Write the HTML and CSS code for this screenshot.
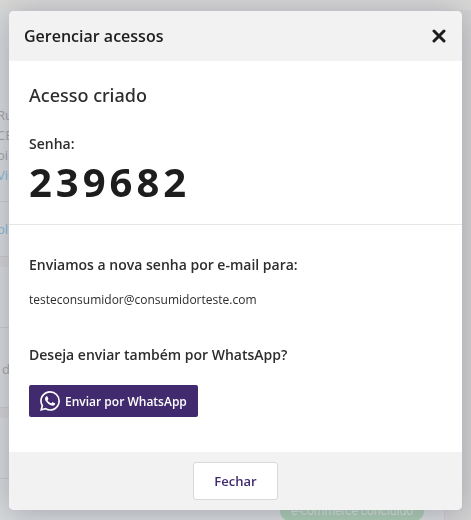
FILE: index.html
```html
<!DOCTYPE html>
<html lang="pt-BR">
<head>
<meta charset="utf-8">
<meta name="viewport" content="width=device-width, initial-scale=1">
<title>Gerenciar acessos</title>
<link rel="stylesheet" href="styles.css">
</head>
<body>
<div class="page" aria-hidden="true">
  <div class="page-top"></div>
  <div class="card card-address">
    <div class="address">
      <p>Ru</p>
      <p>CE</p>
      <p>oi</p>
      <p class="page-link">Vis</p>
    </div>
    <p class="card-foot page-link">ol</p>
  </div>
  <div class="card card-data">
    <div class="card-head"></div>
    <p class="card-row">d</p>
  </div>
  <div class="card card-status">
    <div class="card-head"></div>
    <span class="badge">e-commerce concluído</span>
  </div>
</div>

<div class="overlay">
  <section class="modal" role="dialog" aria-modal="true" aria-labelledby="modal-title">
    <header class="modal-header">
      <h1 id="modal-title">Gerenciar acessos</h1>
      <button class="close" type="button" aria-label="Fechar janela">
        <svg viewBox="0 0 14 14" width="14" height="14"><path d="M2 2l10 10M12 2L2 12"/></svg>
      </button>
    </header>
    <div class="section password">
      <h2>Acesso criado</h2>
      <p class="label">Senha:</p>
      <p class="code">239682</p>
    </div>
    <div class="section delivery">
      <p class="label">Enviamos a nova senha por e-mail para:</p>
      <p class="email">testeconsumidor@consumidorteste.com</p>
      <p class="label">Deseja enviar também por WhatsApp?</p>
      <button class="whatsapp" type="button">
        <svg viewBox="0 0 24 24" width="20" height="20"><path d="M17.472 14.382c-.297-.149-1.758-.867-2.03-.967-.273-.099-.471-.148-.67.15-.197.297-.767.966-.94 1.164-.173.199-.347.223-.644.075-.297-.15-1.255-.463-2.39-1.475-.883-.788-1.48-1.761-1.653-2.059-.173-.297-.018-.458.13-.606.134-.133.298-.347.446-.52.149-.174.198-.298.298-.497.099-.198.05-.371-.025-.52-.075-.149-.669-1.612-.916-2.207-.242-.579-.487-.5-.669-.51-.173-.008-.371-.01-.57-.01-.198 0-.52.074-.792.372-.272.297-1.04 1.016-1.04 2.479 0 1.462 1.065 2.875 1.213 3.074.149.198 2.096 3.2 5.077 4.487.709.306 1.262.489 1.694.625.712.227 1.36.195 1.871.118.571-.085 1.758-.719 2.006-1.413.248-.694.248-1.289.173-1.413-.074-.124-.272-.198-.57-.347m-5.421 7.403h-.004a9.87 9.87 0 01-5.031-1.378l-.361-.214-3.741.982.998-3.648-.235-.374a9.86 9.86 0 01-1.51-5.26c.001-5.45 4.436-9.884 9.888-9.884 2.64 0 5.122 1.03 6.988 2.898a9.825 9.825 0 012.893 6.994c-.003 5.45-4.437 9.884-9.885 9.884m8.413-18.297A11.815 11.815 0 0012.05 0C5.495 0 .16 5.335.157 11.892c0 2.096.547 4.142 1.588 5.945L.057 24l6.305-1.654a11.882 11.882 0 005.683 1.448h.005c6.554 0 11.89-5.335 11.893-11.893a11.821 11.821 0 00-3.48-8.413z"/></svg>
        <span>Enviar por WhatsApp</span>
      </button>
    </div>
    <footer class="modal-footer">
      <button class="dismiss" type="button">Fechar</button>
    </footer>
  </section>
</div>
</body>
</html>
```
FILE: styles.css
```css
* {
  box-sizing: border-box;
}

body,
h1,
h2,
p {
  margin: 0;
}

body {
  height: 100vh;
  overflow: hidden;
  background: #d3d3d3;
  color: #2d2d2d;
  font-family: "Open Sans", "Noto Sans", sans-serif;
  font-size: 14px;
}

button {
  font-family: inherit;
  cursor: pointer;
}

/* Page behind the dialog */
.page {
  height: 100vh;
  overflow: hidden;
  color: #9fa1a1;
  font-size: 13px;
  line-height: 20px;
}

.page p {
  margin-left: -3px;
}

.page-top {
  height: 10px;
  background: #d9d9d7;
}

.page .page-link {
  color: #7fb8d3;
}

.card {
  margin: 0 26px 10px 0;
  background: #d7dada;
  border-right: 1px solid #cccccc;
  border-bottom: 1px solid #c8caca;
}

.address {
  height: 192px;
  padding-top: 95px;
  border-bottom: 1px solid #c8caca;
}

.card-foot {
  padding: 17px 0;
}

.card-head {
  height: 61px;
  border-bottom: 1px solid #c8caca;
}

.card-row {
  padding: 31px 0 28px 5px;
}

.card-status {
  display: flex;
  flex-direction: column;
}

.badge {
  align-self: flex-end;
  margin: 22px 20px 20px;
  padding: 0 11px;
  border-radius: 10px;
  background: #a9cbb1;
  color: #d6e2d8;
  font-family: Roboto, "Open Sans", sans-serif;
  font-size: 12px;
}

/* Dialog */
.overlay {
  position: fixed;
  inset: 0;
  padding: 11px 9px 10px;
}

.modal {
  overflow: hidden;
  border-radius: 5px;
  background: #fff;
  box-shadow: 0 2px 30px rgba(100, 100, 125, 0.45);
}

.modal-header {
  display: flex;
  align-items: center;
  justify-content: space-between;
  height: 50px;
  padding: 0 16px 0 15px;
  background: #f2f2f2;
  color: #1d1d1d;
}

.modal-header h1 {
  font-size: 16px;
  font-weight: 600;
  line-height: 24px;
}

.close {
  display: flex;
  padding: 0;
  border: 0;
  background: none;
}

.close svg {
  fill: none;
  stroke: #1d1d1d;
  stroke-width: 3;
  stroke-linecap: round;
}

.section {
  padding: 0 20px;
}

.password {
  padding-top: 22px;
  padding-bottom: 16px;
  border-bottom: 1px solid #e5e5e5;
}

.password h2 {
  margin-bottom: 25px;
  font-family: "Noto Sans", sans-serif;
  font-size: 18px;
  font-weight: 500;
  line-height: 24px;
}

.label {
  font-weight: 600;
  line-height: 24px;
}

.code {
  color: #1d1d1d;
  font-size: 40px;
  font-weight: 700;
  letter-spacing: 4px;
  line-height: 52px;
}

.delivery {
  padding-top: 28px;
  padding-bottom: 35px;
}

.email {
  margin: 12px 0 32px;
  font-size: 12px;
  line-height: 22px;
}

.whatsapp {
  display: flex;
  align-items: center;
  gap: 5px;
  height: 32px;
  margin-top: 18px;
  padding: 0 11px;
  border: 0;
  border-radius: 2px;
  background: #412b6e;
  color: #fff;
  font-size: 12px;
  font-weight: 600;
}

.whatsapp svg {
  fill: #fff;
}

.modal-footer {
  display: flex;
  justify-content: center;
  padding: 10px;
  background: #f2f2f2;
}

.dismiss {
  height: 38px;
  padding: 0 20px;
  border: 1px solid #d9d9d9;
  border-radius: 3px;
  background: #fff;
  color: #412b6e;
  font-size: 13px;
  font-weight: 600;
}
```
